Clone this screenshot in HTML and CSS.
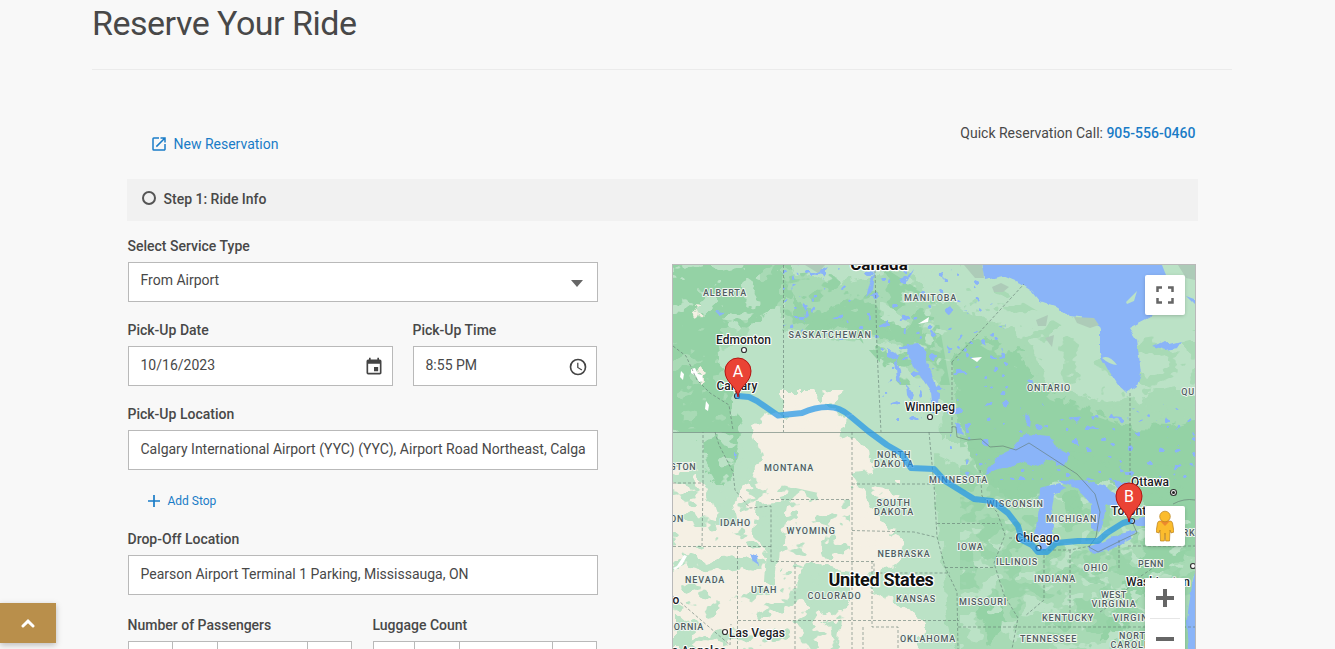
FILE: index.html
```
<!DOCTYPE html>
<html lang="en">
<head>
<meta charset="utf-8">
<title>Reserve Your Ride</title>
<link rel="stylesheet" href="styles.css">
</head>
<body>
<main class="page">
  <h1 class="title">Reserve Your Ride</h1>
  <section class="panel">
    <div class="toolbar">
      <a class="new-link"><svg width="18" height="18" viewBox="0 0 24 24"><path fill="currentColor" d="M19 19H5V5h7V3H5a2 2 0 0 0-2 2v14a2 2 0 0 0 2 2h14c1.100 0 2-.9 2-2v-7h-2v7zM14 3v2h3.590l-9.830 9.830 1.410 1.410L19 6.410V10h2V3h-7z"/></svg>New Reservation</a>
      <p class="call">Quick Reservation Call: <b>905-556-0460</b></p>
    </div>
    <div class="step"><span class="ring"></span>Step 1: Ride Info</div>
    <div class="columns">
      <form class="form">
        <div class="field"><label>Select Service Type</label><div class="box select"><span>From Airport</span><svg width="12" height="7" viewBox="0 0 12 7"><path fill="#666" d="M0 0h12L6 7z"/></svg></div></div>
        <div class="row">
          <div class="field date"><label>Pick-Up Date</label><div class="box"><span>10/16/2023</span><svg width="20" height="20" viewBox="0 0 24 24"><path fill="#444" d="M17 12h-5v5h5v-5zM16 1v2H8V1H6v2H5a2 2 0 0 0-2 2v14a2 2 0 0 0 2 2h14c1.100 0 2-.9 2-2V5a2 2 0 0 0-2-2h-1V1h-2zm3 18H5V8h14v11z"/></svg></div></div>
          <div class="field time"><label>Pick-Up Time</label><div class="box"><span>8:55 PM</span><svg width="20" height="20" viewBox="0 0 24 24"><path fill="#444" d="M12 2a10 10 0 1 0 0 20 10 10 0 0 0 0-20zm0 18a8 8 0 1 1 0-16 8 8 0 0 1 0 16zm.5-13H11v6l5.250 3.150.75-1.230-4.500-2.670z"/></svg></div></div>
        </div>
        <div class="field"><label>Pick-Up Location</label><div class="box"><span>Calgary International Airport (YYC) (YYC), Airport Road Northeast, Calga</span></div></div>
        <a class="add"><svg width="12" height="12" viewBox="0 0 12 12"><path d="M6 0v12M0 6h12" stroke="currentColor" stroke-width="1.700"/></svg>Add Stop</a>
        <div class="field drop"><label>Drop-Off Location</label><div class="box"><span>Pearson Airport Terminal 1 Parking, Mississauga, ON</span></div></div>
        <div class="row counts">
          <div class="field pass"><label>Number of Passengers</label><div class="stepper"><i></i><i></i><i></i><i></i></div></div>
          <div class="field bags"><label>Luggage Count</label><div class="stepper"><i></i><i></i><i></i><i></i></div></div>
        </div>
      </form>
      <div class="map">
        <svg class="canvas" width="522" height="384" viewBox="673 265 522 384">
          <defs>
            <filter id="rough" x="-5%" y="-5%" width="110%" height="110%"><feTurbulence type="fractalNoise" baseFrequency=".06" numOctaves="3" seed="4"/><feDisplacementMap in="SourceGraphic" scale="20" xChannelSelector="R" yChannelSelector="G"/></filter>
            <filter id="coast" x="-5%" y="-5%" width="110%" height="110%"><feTurbulence type="fractalNoise" baseFrequency=".12" numOctaves="2" seed="8"/><feDisplacementMap in="SourceGraphic" scale="5" xChannelSelector="R" yChannelSelector="G"/></filter>
            <filter id="speckle" x="0" y="0" width="100%" height="100%" color-interpolation-filters="sRGB"><feTurbulence type="fractalNoise" baseFrequency=".045 .06" numOctaves="3" seed="11"/><feColorMatrix values="0 0 0 0 0  0 0 0 0 0  0 0 0 0 0  30 0 0 0 -15.800" result="n"/><feComposite in="SourceGraphic" in2="n" operator="in"/></filter>
            <filter id="sparse" x="0" y="0" width="100%" height="100%" color-interpolation-filters="sRGB"><feTurbulence type="fractalNoise" baseFrequency=".05 .07" numOctaves="3" seed="19"/><feColorMatrix values="0 0 0 0 0  0 0 0 0 0  0 0 0 0 0  0 30 0 0 -17.300" result="n"/><feComposite in="SourceGraphic" in2="n" operator="in"/></filter>
            <filter id="lakes" x="0" y="0" width="100%" height="100%" color-interpolation-filters="sRGB"><feTurbulence type="fractalNoise" baseFrequency=".11 .13" numOctaves="2" seed="35"/><feColorMatrix values="0 0 0 0 0  0 0 0 0 0  0 0 0 0 0  0 0 30 0 -20.300" result="n"/><feComposite in="SourceGraphic" in2="n" operator="in"/></filter>
          </defs>
          <rect x="660" y="250" width="550" height="410" fill="#bbe2c6"/>
          <!-- vegetation -->
          <g filter="url(#rough)">
            <path fill="#94d2a5" d="M650 240H790V300L770 312 748 325 730 318 720 345 722 372 733 390 731 412 742 434 735 468 722 494 706 470 702 440 673 428 650 430z"/>
            <path fill="#a8dab5" d="M783 265L830 285 880 275 905 265 950 320 990 345 950 385 915 375 895 345 850 340 783 330z"/>
            <path fill="#94d2a5" d="M790 295L815 315 850 305 890 320 895 340 850 335 800 325zM880 320L935 335 950 350 925 345 905 335z"/>
            <path fill="#a8dab5" d="M935 295L990 320 1030 340 1050 385 1110 405 1145 395 1200 385V440H940z"/>
            <path fill="#94d2a5" d="M953 350L985 340 1020 350 1035 390 1070 402 1104 412 1125 427 1170 428 1210 415V520L1110 484 1060 480 1030 500 990 496 975 460 960 425z"/>
            <path fill="#a8dab5" d="M935 455L1010 490 1060 500 1210 500V660H955L945 610 940 560z"/>
            <path fill="#94d2a5" d="M1140 470L1200 480V545L1170 570 1140 600 1120 640 1100 640 1125 585 1145 555zM975 610L1000 600 1010 620 990 640zM1000 470L1030 490 1022 508 1000 495zM1060 495L1078 490 1085 508 1062 512z"/>
            <path fill="#f5f0e4" d="M650 465L695 465 710 500 728 515 745 485 760 455 752 425 765 412 785 420 782 392 815 392 830 408 850 415 842 434 870 448 872 472 850 475 866 498 884 528 904 546 900 562 868 575 870 590 908 612 925 622 918 660H650z"/>
            <path fill="#bbe2c6" d="M706 482L733 490 740 525 720 525zM757 505L790 500 782 540 778 583 763 582 765 548 752 535zM800 575L815 560 830 567 852 570 850 595 830 618 808 605 795 595zM673 610L690 625 698 649H673zM755 615L768 610 760 620zM820 625L840 620 838 640z"/>
            <path fill="#f5f0e4" d="M688 372L700 367 706 380 698 384zM697 308L705 310 700 317z"/>
          </g>
          <path filter="url(#sparse)" fill="#a8dab5" d="M673 265H783V320L735 340V425L673 430z"/>
          <path filter="url(#speckle)" fill="#94d2a5" d="M783 275L880 265 935 300 950 385H900L860 340 783 325z"/>
          <path filter="url(#sparse)" fill="#a8dab5" d="M960 265L1095 345 1195 330V420L1120 425 1050 400 1020 370 980 345z"/>
          <path filter="url(#sparse)" fill="#bbe2c6" d="M673 432H735L760 480 850 500V649H673zM673 265H760V320H673zM880 265H950V370H880zM960 520H1195V649H960z"/>
          <path filter="url(#sparse)" fill="#f5f0e4" d="M855 480H900V560H855zM780 390H850V432H780z"/>
          <path filter="url(#speckle)" fill="#94d2a5" d="M960 435L1195 470V649H1090L960 600z" fill-opacity=".75"/>
          <path filter="url(#lakes)" fill="#8ab4f8" d="M783 265H970L1010 330 1050 420 1195 400V480H950V425H880V340H783z"/>
          <!-- water -->
          <g fill="#8ab4f8" filter="url(#coast)">
            <path d="M982 260L984 280 1003 276 1020 283 1032 291 1040 301 1055 306 1070 316 1095 319 1100 330 1100 355 1108 370 1118 385 1127 393 1137 386 1141 374 1137 340 1129 328 1150 317 1172 302 1168 280 1160 260z"/>
            <path d="M908 344L918 343 925 350 928 366 935 382 939 395 938 403 932 402 931 392 923 380 914 368 911 360 907 354zM888 349L900 355 896 360 888 357zM895 359L900 370 901 385 897 380zM906 384L914 395 911 402 907 395z"/>
            <path d="M985 474L998 456 1012 449 1025 434 1050 436 1057 448 1070 455 1064 466 1048 459 1038 467 1022 461 1010 467z"/>
            <path d="M1040 488L1060 483 1065 488 1054 495 1052 508 1054 526 1050 545 1041 551 1035 535 1039 508z"/>
            <path d="M1058 481L1083 480 1105 486 1119 498 1118 508 1106 504 1103 524 1098 532 1091 528 1091 504 1078 490zM1112 479L1130 484 1133 498 1120 493z"/>
            <path d="M1087 547L1100 543 1120 534 1137 530 1130 539 1109 550 1092 554zM1130 520L1150 516 1174 520 1155 526 1137 526z"/>
            <path d="M1197 565L1193 580 1190 598 1187 620 1189 650H1200zM1152 346L1164 340 1170 345 1182 342 1178 348 1165 350zM750 553L757 556 759 566 753 562zM817 271L828 266 824 272zM954 421L960 424 963 435 957 433zM1026 413L1031 418 1030 427 1024 420zM1186 296L1194 299 1194 304zM1180 265L1190 274 1197 270 1192 265zM870 282L875 272 873 290 866 297zM914 268L910 278 904 281zM735 450L738 456 735 459zM715 311L727 312 719 315zM802 301L808 306 804 310zM807 308L809 316 805 318z"/>
          </g>
          <g fill="#bbe2c6"><path d="M1102 358Q1109 354 1117 365 1110 365 1102 358M1126 302L1137 291 1134 301 1127 304M1164 265H1173L1182 276 1170 280z"/></g>
          <g fill="#adcbb8"><path d="M964 265H982L984 278 975 278zM992 287L1001 283 1009 287 1003 292 994 292zM1074 317L1094 318 1099 325 1090 328 1077 323zM1036 320L1048 315 1046 326 1038 326zM1178 265H1195V280L1186 278zM1045 338L1054 335 1052 347zM805 265H825L818 273z"/></g>
          <path fill="#fff" d="M673 568L677 566 684 555 687 556 682 565 675 570zM691 369l4-1 3 6 4 1 1 6-4 1-3-6-5-3zM706 401l3 4-1 6-3-2zM681 371l3 3-1 6-3-3zM918 324l11-7-1 5zM971 358l11-1-5 5z"/>
          <!-- borders -->
          <g fill="none" stroke="#627870" stroke-opacity=".75" stroke-width=".8">
            <path d="M673 432.500H952V426.500L956 427 957 437 968 440 981 439 990 447 1003 446 1016 450 1029 443 1063 465 1077 474 1095 494 1100 512 1096 537 1089 547 1098 552 1122 540 1137 533 1131 519M1173 504Q1184 498 1195 500"/>
            <g stroke-dasharray="3 2">
              <path d="M783.500 265V432M875 270L877 350 881 432M952 362V428M952 362L1024 284M1130 393V475M673 346L686 356 697 380 710 393 729 405 733 430M715 432L719 445 733 472 735 490 750 508 771 506V561.500M673 483H703V432M703 483L702 546M673 546.500H771M737.500 546V649M771 561.500H874V573H950M795 561V649M738 620.500H959M771 499.500H851M852 432V649M852 484H935M852 530.500L914 532 935 537M929 432L934 485 937 537 945 567 957 592 958 649M937 523.500H998M945 567.500H995M1009 538H1035M980 470L982 496 997 512 1005 535 994 563 1004 595 1018 618 1012 649M958 627H1195M872 561V627H898V649M863 627V649M1070 550V620M1038 550H1070L1090 546M1119 540V570M1128 546H1195M673 596L730 645 731 624M1100 612L1118 600 1135 580 1165 560M1044 555V600L1025 616"/>
            </g>
          </g>
          <!-- labels -->
          <g class="state">
            <text x="725" y="296" textLength="44">ALBERTA</text><text x="830" y="338" textLength="83">SASKATCHEWAN</text><text x="930.500" y="301" textLength="53">MANITOBA</text><text x="1049" y="391" textLength="44">ONTARIO</text><text x="1191" y="395">QUE</text>
            <text x="683" y="470">GTON</text><text x="789" y="471" textLength="50">MONTANA</text><text x="894" y="458" textLength="34">NORTH</text><text x="894" y="467" textLength="40">DAKOTA</text><text x="958.500" y="483" textLength="59">MINNESOTA</text><text x="1015" y="507" textLength="57">WISCONSIN</text><text x="893.500" y="506" textLength="34">SOUTH</text><text x="894" y="515" textLength="40">DAKOTA</text>
            <text x="677" y="522">ON</text><text x="735.500" y="526" textLength="31">IDAHO</text><text x="811" y="534" textLength="49">WYOMING</text><text x="904" y="557" textLength="53">NEBRASKA</text><text x="970.500" y="550" textLength="26">IOWA</text><text x="1017" y="565" textLength="42">ILLINOIS</text><text x="1071.500" y="522" textLength="51">MICHIGAN</text>
            <text x="705" y="583" textLength="40">NEVADA</text><text x="764" y="593" textLength="26">UTAH</text><text x="834.500" y="599" textLength="54">COLORADO</text><text x="916" y="602" textLength="40">KANSAS</text><text x="983" y="605" textLength="48">MISSOURI</text><text x="1055" y="582" textLength="42">INDIANA</text><text x="1096" y="571" textLength="25">OHIO</text><text x="1151" y="567" textLength="26">PENN</text><text x="1189" y="536">RK</text><text x="1114" y="598" textLength="26">WEST</text><text x="1114" y="607" textLength="45">VIRGINIA</text><text x="1068" y="621" textLength="52">KENTUCKY</text><text x="1136" y="621" textLength="46">VIRGINIA</text><text x="1048.500" y="642" textLength="57">TENNESSEE</text><text x="1136" y="639" textLength="34">NORTH</text><text x="1136" y="648" textLength="51">CAROLINA</text><text x="928" y="642" textLength="56">OKLAHOMA</text><text x="686" y="630">FORNIA</text>
          </g>
          <g class="city"><text x="743.500" y="344" textLength="55">Edmonton</text><text x="737" y="390" textLength="41">Calgary</text><text x="930" y="411" textLength="50">Winnipeg</text><text x="1037.500" y="542" textLength="44">Chicago</text><text x="1150" y="486" textLength="38">Ottawa</text><text x="1132" y="515" textLength="42">Toronto</text><text x="1158" y="586" textLength="64">Washington</text><text x="757" y="636.500" textLength="56">Las Vegas</text><text x="676" y="604">o</text><text x="692" y="655" textLength="68">Los Angeles</text></g>
          <g class="country"><text class="ca" x="879" y="270">Canada</text><text x="881" y="586">United States</text></g>
          <g fill="#fff" stroke="#333" stroke-width="1.200"><circle cx="744" cy="350" r="2.500"/><circle cx="737" cy="396" r="2.500"/><circle cx="930" cy="417" r="2.500"/><circle cx="1038.500" cy="548" r="2.500"/><circle cx="1132" cy="521" r="2.500"/><circle cx="725" cy="632" r="2.500"/><circle cx="1193" cy="566" r="2.500"/><circle cx="1173.500" cy="492.500" r="3"/></g>
          <circle cx="1173.500" cy="492.500" r="1.500" fill="#222"/>
          <path fill="none" stroke="#2094e8" stroke-opacity=".7" stroke-width="6" stroke-linejoin="round" stroke-linecap="round" d="M738 396L749 397 757 401 778 415.500 802 413Q815 407 828 407 840 407 850 416L868 431 887 445 901 453 911 468 934 469 945 481 974 499 992 501 1008 513 1018 526 1022 540 1032 545 1038 552 1047 552 1056 543 1078 541 1098 541 1107 533 1123 523 1130 521"/>
          <g class="pin"><path d="M738 397C737 386 725 383 725 371A13 13 0 0 1 751 371C751 383 739 386 738 397z"/><path d="M1129 522C1128 511 1116 508 1116 496A13 13 0 0 1 1142 496C1142 508 1130 511 1129 522z"/><text x="738" y="377">A</text><text x="1129" y="502">B</text></g>
        </svg>
        <div class="control full"><svg width="18" height="18" viewBox="0 0 18 18"><path d="M1.500 6V1.500H6M12 1.500h4.500V6M16.500 12v4.500H12M6 16.500H1.500V12" fill="none" stroke="#666" stroke-width="2.500"/></svg></div>
        <div class="control person"><svg width="18" height="32" viewBox="0 0 18 32"><path d="M4 11h10q2 0 2.500 2L18 22l-3 1-1-3-.5 11H9.700L9 23l-.7 8H4.500L4 20l-1 3-3-1 1.500-9Q2 11 4 11z" fill="#fbbc2d" stroke="#b8801b" stroke-width=".7"/><path d="M4 11h10l-5 5z" fill="#ed8a2e"/><circle cx="9" cy="6.500" r="5.300" fill="#fbbc2d" stroke="#b8801b" stroke-width=".7"/></svg></div>
        <div class="control zoom"><svg width="40" height="80" viewBox="0 0 40 80"><path d="M11 20h18M20 11v18M11 61h18" stroke="#666" stroke-width="4"/><path d="M5 40.500h30" stroke="#e6e6e6"/></svg></div>
      </div>
    </div>
  </section>
</main>
<button class="top"><svg width="14" height="9" viewBox="0 0 14 9"><path d="M2 7l5-4.800L12 7" fill="none" stroke="#fff" stroke-width="3" stroke-linecap="round"/></svg></button>
</body>
</html>
```
FILE: styles.css
```
* { box-sizing: border-box; }
body { margin: 0; height: 649px; overflow: hidden; background: #f8f8f8; color: #484848; font: 14px/20px Roboto, sans-serif; }
.page { width: 1140px; margin-left: 92px; }
.title { margin: 0; height: 70px; padding-top: 3px; border-bottom: 1px solid #ebebeb; font-size: 34px; letter-spacing: -.5px; line-height: 40px; font-weight: 400; }
.panel { width: 1071px; margin-left: 34.500px; padding-top: 53px; }
.toolbar { display: flex; justify-content: space-between; height: 56px; padding: 0 2px 0 23px; }
.new-link { display: flex; align-items: center; gap: 6px; height: 42px; color: #1a7cc7; }
.call { margin: 0; }
.call b { font-weight: 500; color: #1a7cc7; }
.step { display: flex; align-items: center; gap: 8px; height: 42px; padding: 0 15px 2px; background: #f1f1f1; font-weight: 500; }
.ring { width: 14px; height: 14px; margin-bottom: 2px; border: 2px solid #555; border-radius: 50%; }
.columns { display: flex; justify-content: space-between; padding: 15px 1.500px 0 1px; }
.form { width: 470px; }
.field { height: 84px; }
.field label { display: block; height: 26px; font-weight: 500; }
.box { display: flex; align-items: center; justify-content: space-between; height: 40px; padding: 0 8px 2px 12px; background: #fff; border: 1px solid #b9b9b9; white-space: nowrap; overflow: hidden; }
.box svg { margin-top: 3px; }
.select { padding: 0 14px 4px 12px; }
.select svg { margin-top: 6px; }
.row { display: flex; gap: 20px; }
.date { width: 265px; }
.time { width: 184px; }
.add { display: flex; align-items: center; gap: 8px; height: 20px; margin: 3px 0 18px 20px; color: #1a7cc7; font-size: 12px; }
.drop { height: 86px; }
.counts { gap: 21px; }
.pass { width: 224px; }
.bags { width: 224px; }
.stepper { display: grid; grid-template-columns: 43px 45px 90px 1fr; height: 40px; background: #fff; border: 1px solid #b9b9b9; }
.bags .stepper { grid-template-columns: 40px 45px 93px 1fr; }
.stepper i + i { border-left: 1px solid #b9b9b9; }
.map { position: relative; width: 524px; height: 386px; margin-top: 28px; border: 1px solid #b9b9b9; overflow: hidden; }
.canvas { display: block; }
.canvas text { text-anchor: middle; font-family: Roboto, sans-serif; paint-order: stroke; stroke-linejoin: round; }
.state text { font-size: 9px; font-weight: 500; letter-spacing: .7px; fill: #505c60; stroke: #edf5ee; stroke-width: 2px; }
.city text { font-size: 12px; font-weight: 500; fill: #202124; stroke: #fff; stroke-width: 2px; }
.country text { font-size: 18px; font-weight: 700; letter-spacing: -.3px; fill: #111; stroke: #fff; stroke-width: 2.500px; }
.country .ca { font-size: 17px; letter-spacing: 0; }
.pin path { fill: #ea4335; stroke: #b31412; stroke-width: 1px; }
.canvas .pin text { font-size: 16px; fill: #fff; }
.control { position: absolute; right: 10px; width: 40px; height: 40px; display: flex; align-items: center; justify-content: center; background: #fff; border-radius: 2px; box-shadow: 0 1px 4px -1px rgba(0, 0, 0, .3); }
.full { top: 10px; }
.person { top: 241px; }
.zoom { top: 313px; height: 81px; align-items: flex-start; }
.top { position: fixed; left: 0; top: 603px; width: 56px; height: 40px; display: grid; place-items: center; padding: 0; border: 0; background: #b98f4b; box-shadow: 0 2px 6px rgba(0, 0, 0, .25); }
```
